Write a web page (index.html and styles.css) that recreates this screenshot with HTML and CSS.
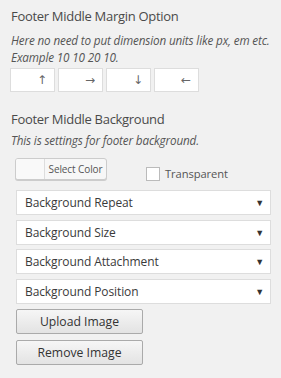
FILE: index.html
```html
<!DOCTYPE html>
<html>
<head>
<meta charset="utf-8">
<link rel="stylesheet" href="styles.css">
</head>
<body>
<div class="panel">
  <h3 class="title">Footer Middle Margin Option</h3>
  <p class="desc">Here no need to put dimension units like px, em etc. Example 10 10 20 10.</p>
  <div class="dims">
    <input class="dim" type="text" placeholder="↑">
    <input class="dim" type="text" placeholder="→">
    <input class="dim" type="text" placeholder="↓">
    <input class="dim" type="text" placeholder="←">
  </div>

  <h3 class="title title-bg">Footer Middle Background</h3>
  <p class="desc desc-bg">This is settings for footer background.</p>
  <div class="controls">
    <div class="color-row">
      <button class="color-btn"><span class="swatch"></span><span class="color-label">Select Color</span></button>
      <label class="transparent"><span class="check"></span>Transparent</label>
    </div>
    <div class="select">Background Repeat<span class="caret">▼</span></div>
    <div class="select">Background Size<span class="caret">▼</span></div>
    <div class="select">Background Attachment<span class="caret">▼</span></div>
    <div class="select">Background Position<span class="caret">▼</span></div>
    <button class="btn">Upload Image</button>
    <button class="btn">Remove Image</button>
  </div>
</div>
</body>
</html>
```

FILE: styles.css
```css
html, body {
  margin: 0;
  padding: 0;
  background: #f1f1f1;
}
body {
  font-family: "Open Sans", "Noto Sans", sans-serif;
  color: #555;
}
.panel {
  padding: 7px 0 0 11px;
  display: flex;
  flex-direction: column;
  align-items: flex-start;
}
.title {
  margin: 0;
  font-size: 13px;
  line-height: 18px;
  font-weight: 400;
  letter-spacing: -0.3px;
  color: #4a4a4a;
}
.desc {
  margin: 7px 0 0;
  width: 268px;
  font-size: 11.7px;
  line-height: 17px;
  font-style: italic;
  letter-spacing: -0.15px;
  color: #555;
}
.dims {
  display: flex;
  gap: 3px;
  margin: 2px 0 0 -1px;
}
.dim {
  box-sizing: border-box;
  width: 45px;
  height: 24px;
  margin: 0;
  padding: 0 7px 0 0;
  border: 1px solid #ddd;
  background: #fff;
  text-align: right;
  font-family: "DejaVu Sans", sans-serif;
  font-size: 12px;
  box-shadow: none;
  outline: none;
}
.dim::placeholder {
  color: #666;
}
.title-bg {
  margin-top: 18px;
}
.desc-bg {
  margin-top: 4px;
}
.controls {
  margin: 9px 0 0 4px;
  display: flex;
  flex-direction: column;
  align-items: flex-start;
}
.color-row {
  display: flex;
  align-items: flex-end;
  gap: 39px;
  margin-bottom: 10px;
}
.color-btn {
  box-sizing: border-box;
  display: flex;
  align-items: stretch;
  width: 92px;
  height: 22px;
  padding: 0;
  margin: 0;
  border: 1px solid #ccc;
  border-radius: 3px;
  background: #f7f7f7;
  box-shadow: 0 1px 0 #ccc;
  font-family: inherit;
  cursor: pointer;
}
.swatch {
  width: 28px;
  background: #f9f9f9;
  border-right: 1px solid #ddd;
  border-radius: 2px 0 0 2px;
}
.color-label {
  flex: 1;
  display: flex;
  align-items: center;
  justify-content: center;
  font-size: 10px;
  letter-spacing: -0.1px;
  color: #555;
}
.transparent {
  display: flex;
  align-items: center;
  gap: 5px;
  font-size: 11.2px;
  letter-spacing: -0.1px;
  color: #555;
  margin-bottom: -1px;
}
.check {
  box-sizing: border-box;
  width: 14px;
  height: 14px;
  border: 1px solid #bbb;
  background: #fff;
}
.select {
  box-sizing: border-box;
  width: 255px;
  height: 25px;
  margin: 0 0 4.5px 1px;
  padding: 0 6px 0 8px;
  border: 1px solid #ddd;
  background: #fff;
  display: flex;
  align-items: center;
  justify-content: space-between;
  font-size: 12px;
  letter-spacing: -0.1px;
  color: #3a3a3a;
}
.caret {
  font-size: 9px;
  color: #333;
}
.btn {
  box-sizing: border-box;
  width: 127px;
  height: 25px;
  margin: 0 0 6px 1px;
  padding: 0;
  border: 1px solid #aaa;
  border-radius: 2px;
  background: linear-gradient(#f6f6f6, #e3e3e3);
  font-family: inherit;
  font-size: 12.2px;
  color: #333;
}
.btn:first-of-type {
  margin-top: 1px;
}
```
